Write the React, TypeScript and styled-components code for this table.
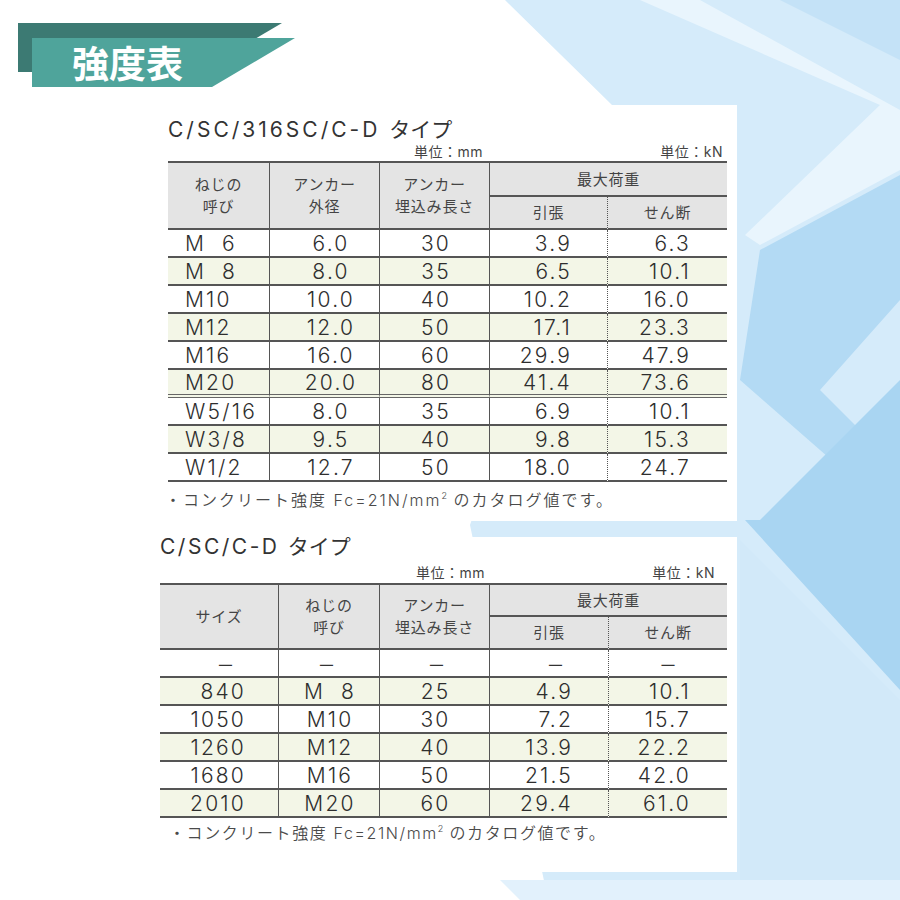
import React from "react";
import styled, { createGlobalStyle } from "styled-components";

const GlobalStyle = createGlobalStyle`
  html, body { margin: 0; padding: 0; background: #fff; }
  body { font-family: Inter, "Noto Sans CJK JP", sans-serif; color: #333; }
`;

const Page = styled.div`
  position: relative;
  width: 900px;
  height: 900px;
  overflow: hidden;
  background: #fff;
`;

const Backdrop = styled.svg`
  position: absolute;
  left: 0;
  top: 0;
  z-index: 0;
`;

const Content = styled.div`
  position: relative;
  z-index: 1;
  display: flex;
  flex-direction: column;
`;

const Banner = styled.div`
  position: relative;
  margin: 23px 0 0 18px;
  width: 277px;
  height: 64px;
  &::before {
    content: "";
    position: absolute;
    left: 0;
    top: 0;
    width: 264px;
    height: 49px;
    background: #3c7a73;
    clip-path: polygon(0 0, 100% 0, 181px 100%, 0 100%);
  }
`;

const BannerFace = styled.h1`
  position: relative;
  box-sizing: border-box;
  margin: 15px 0 0 14px;
  width: 263px;
  height: 49px;
  padding-left: 40px;
  display: flex;
  align-items: center;
  background: #4fa49b;
  clip-path: polygon(0 0, 100% 0, 180px 100%, 0 100%);
  color: #fff;
  font: 700 37px/1 "Noto Sans CJK JP", sans-serif;
  letter-spacing: 0;
`;

const Panel = styled.section<{ $inset: number; $mt: number; $pt: number; $pb: number }>`
  box-sizing: border-box;
  margin: ${(p) => p.$mt}px 0 0 140px;
  width: 597px;
  background: #fff;
  padding: ${(p) => p.$pt}px 0 ${(p) => p.$pb}px ${(p) => p.$inset}px;
`;

const Title = styled.h2<{ $lh: number; $ls: number }>`
  margin: 0;
  font-weight: 400;
  font-size: 21px;
  line-height: ${(p) => p.$lh}px;
  letter-spacing: ${(p) => p.$ls}px;
  color: #333;
  white-space: nowrap;
`;

const Kana = styled.span`
  letter-spacing: 0;
`;

const UnitRow = styled.div<{ $left: number; $mt: number; $mb: number }>`
  display: grid;
  grid-template-columns: ${(p) => p.$left}px 1fr;
  width: 559px;
  margin: ${(p) => p.$mt}px 0 ${(p) => p.$mb}px;
  font-size: 14px;
  line-height: 18px;
  letter-spacing: 0.5px;
  color: #444;
`;

const Unit = styled.span<{ $pr: number }>`
  text-align: right;
  padding-right: ${(p) => p.$pr}px;
`;

const Grid = styled.div<{ $cols: number[]; $h1: number }>`
  display: grid;
  grid-template-columns: ${(p) => p.$cols.map((c) => `${c}px`).join(" ")};
  grid-template-rows: ${(p) => p.$h1}px 33px;
  grid-auto-rows: 28px;
  width: max-content;
  border-top: 2px solid #555;
`;

type Rule = "solid" | "dotted" | "none";

const HeadCell = styled.div<{ $rows?: number; $cols?: number; $rule: Rule }>`
  box-sizing: border-box;
  grid-row: span ${(p) => p.$rows ?? 1};
  grid-column: span ${(p) => p.$cols ?? 1};
  display: flex;
  align-items: center;
  justify-content: center;
  text-align: center;
  background: #e4e4e4;
  border-bottom: 2px solid #555;
  border-right: ${(p) => (p.$rule === "none" ? "0" : `1px ${p.$rule} #555`)};
  font-size: 15px;
  line-height: 22px;
  letter-spacing: 0.8px;
  color: #444;
  padding-top: 1px;
`;

const BodyCell = styled.div<{
  $align: "left" | "center" | "right";
  $pl: number;
  $pr: number;
  $alt: boolean;
  $rule: Rule;
  $double: boolean;
}>`
  box-sizing: border-box;
  display: flex;
  align-items: center;
  justify-content: ${(p) => (p.$align === "left" ? "flex-start" : p.$align === "right" ? "flex-end" : "center")};
  padding: 2px ${(p) => p.$pr}px 0 ${(p) => p.$pl}px;
  background: ${(p) => (p.$alt ? "#f3f6e7" : "#fff")};
  border-bottom: ${(p) => (p.$double ? "4px double #666" : "2px solid #555")};
  border-right: ${(p) => (p.$rule === "none" ? "0" : `1px ${p.$rule} #555`)};
  font-size: 21px;
  font-weight: 350;
  line-height: 24px;
  letter-spacing: 2.2px;
  color: #2e2e2e;
  white-space: nowrap;
`;

const Dash = styled.span`
  font-family: "Noto Sans CJK JP", sans-serif;
  font-size: 18px;
  font-weight: 400;
  letter-spacing: 0;
  color: #333;
`;

const Note = styled.p<{ $ml: number; $ls: number }>`
  margin: 0 0 0 ${(p) => p.$ml}px;
  font-size: 16px;
  font-weight: 350;
  line-height: 20px;
  letter-spacing: ${(p) => p.$ls}px;
  color: #4a4a4a;
  white-space: nowrap;
`;

const NoteWrap = styled.div<{ $mt: number }>`
  margin-top: ${(p) => p.$mt}px;
`;

const Sup = styled.sup`
  font-size: 9px;
  line-height: 0;
  vertical-align: 7px;
  letter-spacing: 0;
`;

type ColSpec = {
  align: "left" | "center" | "right";
  pl: number;
  pr: number;
  rule: Rule;
  dashPl: number;
  dashPr: number;
};

type TableProps = {
  cols: number[];
  specs: ColSpec[];
  heads: React.ReactNode[];
  sub: [string, string];
  group: string;
  rows: string[][];
  h1: number;
  doubleAfter?: number;
};

const StrengthTable: React.FC<TableProps> = ({ cols, specs, heads, sub, group, rows, h1, doubleAfter }) => (
  <Grid $cols={cols} $h1={h1}>
    {heads.map((h, i) => (
      <HeadCell key={i} $rows={2} $rule="solid">
        {h}
      </HeadCell>
    ))}
    <HeadCell $cols={2} $rule="none">
      {group}
    </HeadCell>
    <HeadCell $rule="dotted">{sub[0]}</HeadCell>
    <HeadCell $rule="none">{sub[1]}</HeadCell>
    {rows.map((r, ri) =>
      r.map((v, ci) => {
        const s = specs[ci];
        const dash = v === "－";
        return (
          <BodyCell
            key={`${ri}-${ci}`}
            $align={dash ? "center" : s.align}
            $pl={dash ? s.dashPl : s.pl}
            $pr={dash ? s.dashPr : s.pr}
            $alt={ri % 2 === 1}
            $rule={s.rule}
            $double={doubleAfter === ri}
          >
            {dash ? <Dash>{v}</Dash> : v}
          </BodyCell>
        );
      })
    )}
  </Grid>
);

const twoLines = (a: string, b: string) => (
  <span>
    {a}
    <br />
    {b}
  </span>
);

const specs1: ColSpec[] = [
  { align: "left", pl: 17, pr: 0, rule: "solid", dashPl: 0, dashPr: 0 },
  { align: "center", pl: 13, pr: 0, rule: "solid", dashPl: 0, dashPr: 0 },
  { align: "center", pl: 3, pr: 0, rule: "solid", dashPl: 0, dashPr: 0 },
  { align: "right", pl: 0, pr: 35, rule: "dotted", dashPl: 0, dashPr: 0 },
  { align: "right", pl: 0, pr: 36, rule: "none", dashPl: 0, dashPr: 0 },
];

const specs2: ColSpec[] = [
  { align: "right", pl: 0, pr: 32, rule: "solid", dashPl: 13, dashPr: 0 },
  { align: "center", pl: 2, pr: 0, rule: "solid", dashPl: 0, dashPr: 5 },
  { align: "center", pl: 2, pr: 0, rule: "solid", dashPl: 4, dashPr: 0 },
  { align: "right", pl: 0, pr: 35, rule: "dotted", dashPl: 13, dashPr: 0 },
  { align: "right", pl: 0, pr: 36, rule: "none", dashPl: 0, dashPr: 0 },
];

const F = "\u2007";

const rows1 = [
  [`M${F}6`, "6.0", "30", "3.9", "6.3"],
  [`M${F}8`, "8.0", "35", "6.5", "10.1"],
  ["M10", "10.0", "40", "10.2", "16.0"],
  ["M12", "12.0", "50", "17.1", "23.3"],
  ["M16", "16.0", "60", "29.9", "47.9"],
  ["M20", "20.0", "80", "41.4", "73.6"],
  ["W5/16", "8.0", "35", "6.9", "10.1"],
  ["W3/8", "9.5", "40", "9.8", "15.3"],
  ["W1/2", "12.7", "50", "18.0", "24.7"],
];

const rows2 = [
  ["－", "－", "－", "－", "－"],
  ["840", `M${F}8`, "25", "4.9", "10.1"],
  ["1050", "M10", "30", "7.2", "15.7"],
  ["1260", "M12", "40", "13.9", "22.2"],
  ["1680", "M16", "50", "21.5", "42.0"],
  ["2010", "M20", "60", "29.4", "61.0"],
];

const NoteText = () => (
  <>
    ・コンクリート強度 Fc=21N/mm<Sup>2</Sup> のカタログ値です。
  </>
);

const Background = () => (
  <Backdrop width="900" height="900" viewBox="0 0 900 900" aria-hidden="true">
    <polygon points="505,0 900,0 900,900 548,900 470,525 612,105" fill="#d5ebfa" />
    <polygon points="640,0 700,0 900,110 900,170 760,245 745,235 880,105" fill="#e9f5fd" />
    <polygon points="780,0 900,0 900,60" fill="#c4e2f7" />
    <polygon points="760,250 900,175 900,300 820,390 900,470 900,520 740,380" fill="#b3daf4" />
    <polygon points="745,520 760,520 900,380 900,690" fill="#a9d5f2" />
    <polygon points="740,540 900,700 900,900 740,900" fill="#d2e9f9" />
    <polygon points="500,880 900,880 900,900 520,900" fill="#e2f1fc" />
  </Backdrop>
);

export default function App() {
  return (
    <>
      <GlobalStyle />
      <Page>
        <Background />
        <Content>
          <Banner>
            <BannerFace>強度表</BannerFace>
          </Banner>

          <Panel $inset={28} $mt={18} $pt={12} $pb={11}>
            <Title $lh={26} $ls={3}>
              C/SC/316SC/C-D <Kana>タイプ</Kana>
            </Title>
            <UnitRow $left={322} $mt={0} $mb={0}>
              <Unit $pr={7}>単位：mm</Unit>
              <Unit $pr={4}>単位：kN</Unit>
            </UnitRow>
            <StrengthTable
              cols={[102, 110, 110, 118, 119]}
              specs={specs1}
              h1={34}
              heads={[twoLines("ねじの", "呼び"), twoLines("アンカー", "外径"), twoLines("アンカー", "埋込み長さ")]}
              group="最大荷重"
              sub={["引張", "せん断"]}
              rows={rows1}
              doubleAfter={5}
            />
            <NoteWrap $mt={8}>
              <Note $ml={-3} $ls={2}>
                <NoteText />
              </Note>
            </NoteWrap>
          </Panel>

          <Panel $inset={20} $mt={16} $pt={0} $pb={29}>
            <Title $lh={20} $ls={2.5}>
              C/SC/C-D <Kana>タイプ</Kana>
            </Title>
            <UnitRow $left={330} $mt={7} $mb={1}>
              <Unit $pr={5}>単位：mm</Unit>
              <Unit $pr={4}>単位：kN</Unit>
            </UnitRow>
            <StrengthTable
              cols={[119, 101, 110, 119, 118]}
              specs={specs2}
              h1={32}
              heads={["サイズ", twoLines("ねじの", "呼び"), twoLines("アンカー", "埋込み長さ")]}
              group="最大荷重"
              sub={["引張", "せん断"]}
              rows={rows2}
            />
            <NoteWrap $mt={5}>
              <Note $ml={9} $ls={1.6}>
                <NoteText />
              </Note>
            </NoteWrap>
          </Panel>
        </Content>
      </Page>
    </>
  );
}
